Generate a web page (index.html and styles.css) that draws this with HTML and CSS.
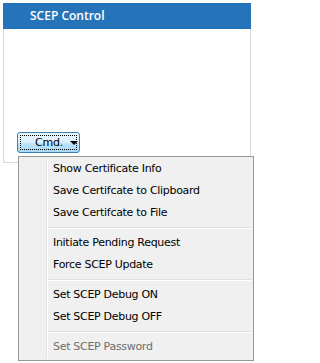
FILE: index.html
```html
<!DOCTYPE html>
<html>
<head>
<meta charset="utf-8">
<link rel="stylesheet" href="styles.css">
</head>
<body>
<div class="panel">
  <div class="panel-head">SCEP Control</div>
  <div class="panel-body">
    <button class="cmd-btn"><span class="focus"><span class="cmd-label">Cmd.</span><span class="caret"></span></span></button>
  </div>
</div>
<div class="menu">
  <div class="gutter"></div>
  <div class="item">Show Certificate Info</div>
  <div class="item">Save Certifcate to Clipboard</div>
  <div class="item">Save Certifcate to File</div>
  <div class="sep"></div>
  <div class="item">Initiate Pending Request</div>
  <div class="item">Force SCEP Update</div>
  <div class="sep"></div>
  <div class="item">Set SCEP Debug ON</div>
  <div class="item">Set SCEP Debug OFF</div>
  <div class="sep"></div>
  <div class="item disabled">Set SCEP Password</div>
</div>
</body>
</html>
```

FILE: styles.css
```css
html, body {
  margin: 0;
  padding: 0;
  background: #ffffff;
}
body {
  width: 257px;
  height: 363px;
  position: relative;
  overflow: hidden;
  font-family: "DejaVu Sans", "Liberation Sans", sans-serif;
}
.panel {
  margin: 3px 0 0 3px;
  width: 248px;
}
.panel-head {
  height: 26px;
  background: #2574ba;
  color: #ffffff;
  font-family: "Open Sans", "Liberation Sans", sans-serif;
  font-weight: 600;
  font-size: 12px;
  line-height: 25px;
  padding-left: 27px;
}
.panel-body {
  border: 1px solid #d8d8d8;
  border-top: none;
  padding: 103px 0 0 13px;
  box-sizing: border-box;
  height: 134px;
}
.cmd-btn {
  display: block;
  width: 63px;
  height: 21px;
  margin: 0;
  padding: 2px;
  border: 1px solid #3c7fb1;
  border-radius: 3px;
  background: linear-gradient(to bottom, #eaf6fd 0%, #d9f0fc 50%, #bee6fd 51%, #a7d9f5 100%);
  box-sizing: border-box;
  font-family: "DejaVu Sans", sans-serif;
  font-size: 11px;
  letter-spacing: -0.2px;
  color: #000;
}
.focus {
  display: flex;
  align-items: center;
  justify-content: flex-start;
  height: 100%;
  width: 100%;
  border: 1px dotted #000;
  box-sizing: border-box;
  padding-left: 14px;
  gap: 7px;
}
.cmd-label {
  line-height: 13px;
}
.caret {
  flex: none;
  width: 0;
  height: 0;
  border-left: 4px solid transparent;
  border-right: 4px solid transparent;
  border-top: 4px solid #000;
  margin-top: 1px;
}
.menu {
  position: absolute;
  left: 18px;
  top: 156px;
  width: 236px;
  height: 205px;
  box-sizing: border-box;
  border: 1px solid #979797;
  background: #f0f0f0;
  padding: 1px 2px 2px 2px;
}
.gutter {
  position: absolute;
  left: 27px;
  top: 1px;
  bottom: 1px;
  width: 1px;
  background: #e2e3e3;
  border-right: 1px solid #ffffff;
}
.item {
  position: relative;
  height: 22px;
  line-height: 22px;
  padding-left: 32px;
  font-size: 11px;
  letter-spacing: -0.3px;
  color: #000;
  white-space: nowrap;
}
.item.disabled {
  color: #6d6d6d;
}
.sep {
  position: relative;
  height: 8px;
  margin-left: 27px;
}
.sep::before {
  content: "";
  position: absolute;
  left: 0;
  right: 0;
  top: 3px;
  height: 1px;
  background: #e0e0e0;
  border-bottom: 1px solid #ffffff;
}
```
